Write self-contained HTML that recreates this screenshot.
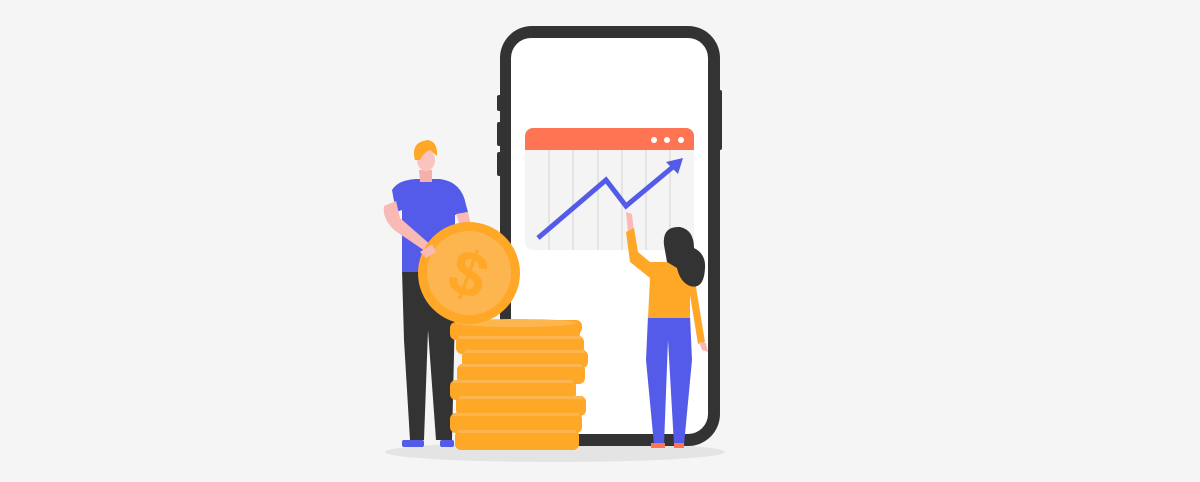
<!DOCTYPE html>
<html><head><style>html,body{margin:0;padding:0;background:#f5f5f5}svg{display:block}</style></head>
<body>
<svg width="1200" height="482" viewBox="0 0 1200 482" xmlns="http://www.w3.org/2000/svg">
<rect width="1200" height="482" fill="#f5f5f5"/>
<ellipse cx="555" cy="452" rx="170" ry="10" fill="#e4e4e4"/>
<!-- phone -->
<rect x="497" y="95" width="6" height="16" rx="2" fill="#333"/>
<rect x="497" y="122" width="6" height="24" rx="2" fill="#333"/>
<rect x="497" y="152" width="6" height="24" rx="2" fill="#333"/>
<rect x="716" y="90" width="6" height="60" rx="2" fill="#333"/>
<rect x="500" y="26" width="220" height="420" rx="32" fill="#333"/>
<rect x="511" y="38" width="197" height="396" rx="20" fill="#fff"/>
<!-- chart -->
<rect x="525" y="128" width="169" height="122" rx="8" fill="#f4f4f4"/>
<g stroke="#e4e4e4" stroke-width="2">
<line x1="549" y1="150" x2="549" y2="250"/><line x1="573" y1="150" x2="573" y2="250"/>
<line x1="598" y1="150" x2="598" y2="250"/><line x1="622" y1="150" x2="622" y2="250"/>
<line x1="646" y1="150" x2="646" y2="250"/><line x1="670" y1="150" x2="670" y2="250"/>
</g>
<path d="M525 150 V136 a8 8 0 0 1 8 -8 H686 a8 8 0 0 1 8 8 V150 Z" fill="#ff7452"/>
<circle cx="654" cy="140" r="3" fill="#fff"/><circle cx="667" cy="140" r="3" fill="#fff"/><circle cx="681" cy="140" r="3" fill="#fff"/>
<polyline points="538,238 606,180 626,206 674,166" fill="none" stroke="#545be8" stroke-width="5"/>
<polygon points="683,158 666,162 678,174" fill="#545be8"/>
<!-- woman -->
<path d="M628 232 L626 212 L632 214 L634 232 Z" fill="#f9b9b5"/>
<path d="M648 316 L646 360 L654 445 L664 445 L668 340 L674 445 L684 445 L692 360 L690 316 Z" fill="#545be8"/>
<rect x="651" y="443" width="14" height="5" fill="#ff7452"/><rect x="674" y="443" width="10" height="5" fill="#ff7452"/>
<path d="M626 232 L634 228 L638 252 L650 262 L686 262 L694 275 L705 342 L698 344 L690 295 L690 318 L648 318 L650 278 L630 262 Z" fill="#ffa726"/>
<path d="M699 342 L706 343 L708 352 L702 350 Z" fill="#f9b9b5"/>
<path d="M664 245 Q662 226 680 227 Q694 230 694 248 Q706 254 705 268 Q704 290 690 286 Q680 282 677 268 L667 262 Z" fill="#333"/>
<!-- man -->
<path d="M402 270 L404 340 L410 440 L424 440 L428 330 L436 440 L452 440 L456 270 Z" fill="#333"/>
<rect x="402" y="440" width="22" height="7" rx="2" fill="#545be8"/><rect x="440" y="440" width="14" height="7" rx="2" fill="#545be8"/>
<path d="M392 190 Q398 180 416 179 L440 179 Q462 182 466 205 L468 212 L455 215 L455 272 L402 272 L402 210 L396 212 Z" fill="#545be8"/>
<path d="M384 206 L396 201 L400 218 L432 246 L428 253 L394 230 Q382 218 384 206 Z" fill="#f9b9b5"/>
<path d="M456 214 L468 212 L472 230 L462 232 Z" fill="#f9b9b5"/>
<path d="M419 170 L432 170 L432 182 L420 182 Z" fill="#f4b0ab"/>
<ellipse cx="426" cy="160" rx="9" ry="11" fill="#f9c4c0"/>
<path d="M415 160 Q410 142 428 140 Q438 142 437 156 L430 150 Q424 152 420 160 Z" fill="#ffa726"/>
<!-- coin stack -->
<g fill="#ffa726">
<rect x="455" y="430" width="124" height="20" rx="6"/>
<rect x="450" y="413" width="132" height="20" rx="6"/>
<rect x="456" y="396" width="130" height="20" rx="6"/>
<rect x="450" y="380" width="126" height="20" rx="6"/>
<rect x="457" y="364" width="128" height="20" rx="6"/>
<rect x="462" y="350" width="126" height="18" rx="6"/>
<rect x="456" y="336" width="128" height="18" rx="6"/>
<rect x="450" y="322" width="130" height="18" rx="6"/>
<rect x="454" y="320" width="128" height="14" rx="6"/>
</g>
<g fill="#fdb64f">
<rect x="458" y="430" width="118" height="3"/><rect x="453" y="413" width="126" height="3"/>
<rect x="459" y="396" width="124" height="3"/><rect x="453" y="380" width="120" height="3"/>
<rect x="460" y="364" width="122" height="3"/><rect x="465" y="350" width="120" height="3"/>
<rect x="459" y="336" width="122" height="3"/><ellipse cx="516" cy="323" rx="60" ry="4"/>
</g>
<!-- big coin -->
<circle cx="469" cy="273" r="51" fill="#ffa726"/>
<circle cx="469" cy="273" r="42" fill="#fdb64f"/>
<text x="469" y="296" font-family="Liberation Sans, sans-serif" font-weight="bold" font-size="64" fill="#ffa726" text-anchor="middle" transform="rotate(20 469 273)">$</text>
<path d="M420 252 L432 244 L436 252 L426 258 Z" fill="#f9b9b5"/>
</svg>
</body></html>
